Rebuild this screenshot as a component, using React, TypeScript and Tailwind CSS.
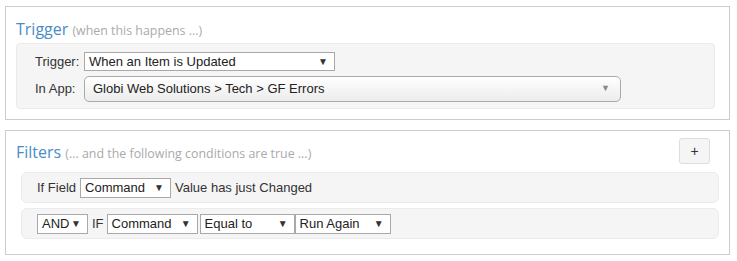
import React from "react";

const Sel = ({ w, text, h = "h-[20px]" }: { w: string; text: string; h?: string }) => (
  <div className={`${w} ${h} flex items-center justify-between border border-[#a9a9a9] bg-white pl-[4px] pr-[6px] text-[13px] text-[#222]`}>
    <span className="whitespace-nowrap">{text}</span>
    <span className="text-[10px] text-[#333] leading-none">▼</span>
  </div>
);

export default function App() {
  return (
    <div className="bg-white w-[737px] h-[261px] pl-[5px] pt-[6px] flex flex-col gap-[10px] text-[#333]" style={{ fontFamily: '"Liberation Sans", Arial, sans-serif' }}>
      {/* Trigger panel */}
      <div className="w-[725px] h-[114px] border border-[#cccccc] pt-[11px] pl-[10px] pr-[14px]">
        <div className="h-[22px] leading-[22px] mb-[3px] whitespace-nowrap" style={{ fontFamily: '"Open Sans", sans-serif' }}>
          <span className="text-[16px] text-[#4a8cc8]">Trigger</span>{" "}
          <span className="text-[12.4px] text-[#aaaaaa]">(when this happens ...)</span>
        </div>
        <div className="h-[66px] border border-[#ebebeb] bg-[#f5f5f5] rounded-[4px] pt-[8px] pl-[18px] flex flex-col gap-[4px]">
          <div className="flex items-center">
            <span className="w-[49px] text-[13px]">Trigger:</span>
            <Sel w="w-[251px]" h="h-[19px]" text="When an Item is Updated" />
          </div>
          <div className="flex items-center">
            <span className="w-[49px] text-[13px]">In App:</span>
            <div className="w-[537px] h-[26px] flex items-center justify-between rounded-[5px] border border-[#aaaaaa] bg-gradient-to-b from-white to-[#ececec] pl-[8px] pr-[10px] text-[13px] text-[#222]">
              <span>Globi Web Solutions &gt; Tech &gt; GF Errors</span>
              <span className="text-[9px] text-[#888] leading-none">▼</span>
            </div>
          </div>
        </div>
      </div>

      {/* Filters panel */}
      <div className="w-[725px] h-[125px] border border-[#cccccc] pt-[7px] pl-[15px] pr-[10px]">
        <div className="flex items-start justify-between mb-[8px] pr-[9px]">
          <div className="mt-[3px] h-[22px] leading-[22px] whitespace-nowrap -ml-[5px]" style={{ fontFamily: '"Open Sans", sans-serif' }}>
            <span className="text-[16px] text-[#4a8cc8]">Filters</span>{" "}
            <span className="text-[12.4px] text-[#aaaaaa]">(... and the following conditions are true ...)</span>
          </div>
          <div className="w-[31px] h-[26px] border border-[#dddddd] bg-[#f5f5f5] rounded-[3px] flex items-center justify-center text-[14px] text-[#333]">+</div>
        </div>
        <div className="flex flex-col gap-[5px]">
          <div className="w-[698px] h-[31px] border border-[#ebebeb] bg-[#f5f5f5] rounded-[6px] pl-[15px] flex items-center gap-[4px] text-[13px]">
            <span>If Field</span>
            <Sel w="w-[91px]" text="Command" />
            <span>Value has just Changed</span>
          </div>
          <div className="w-[698px] h-[31px] border border-[#ebebeb] bg-[#f5f5f5] rounded-[6px] pl-[15px] flex items-center text-[13px]">
            <Sel w="w-[51px]" text="AND" />
            <span className="ml-[4px] mr-[3px]">IF</span>
            <Sel w="w-[91px]" text="Command" />
            <span className="w-[2px]" />
            <Sel w="w-[95px]" text="Equal to" />
            <Sel w="w-[96px]" text="Run Again" />
          </div>
        </div>
      </div>
    </div>
  );
}
